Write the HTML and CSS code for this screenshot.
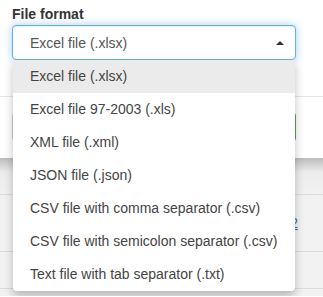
FILE: index.html
```html
<!DOCTYPE html>
<html lang="en">
<head>
    <meta charset="UTF-8">
    <meta name="viewport" content="width=device-width, initial-scale=1.0">
    <title>Export</title>
    <link rel="stylesheet" href="styles.css">
</head>
<body>
    <div class="panel">
        <label class="field-label">File format</label>
        <div class="select-wrap">
            <div class="select">Excel file (.xlsx)<span class="caret"></span></div>
            <ul class="menu">
                <li class="active">Excel file (.xlsx)</li>
                <li>Excel file 97-2003 (.xls)</li>
                <li>XML file (.xml)</li>
                <li>JSON file (.json)</li>
                <li>CSV file with comma separator (.csv)</li>
                <li>CSV file with semicolon separator (.csv)</li>
                <li>Text file with tab separator (.txt)</li>
            </ul>
        </div>
    </div>

    <div class="toolbar">
        <div class="input-group">
            <span class="input"></span>
            <button class="btn-ok">Export</button>
        </div>
    </div>

    <div class="list">
        <div class="row"></div>
        <div class="row pager"><a href="#">2</a></div>
        <div class="row"></div>
    </div>
</body>
</html>
```

FILE: styles.css
```css
body {
    font-family: "Liberation Sans", Arial, sans-serif;
    font-size: 14px;
    margin: 0;
    padding: 0;
    background-color: #fff;
    color: #333;
}

.panel {
    height: 97px;
    box-sizing: border-box;
    padding: 6px 12px 0;
    border-bottom: 1px solid #e5e5e5;
}

.field-label {
    display: block;
    font-weight: bold;
    line-height: 16px;
    margin-bottom: 3px;
    color: #333;
}

.select-wrap {
    position: relative;
    width: 284px;
    z-index: 2;
}

.select {
    display: flex;
    align-items: center;
    justify-content: space-between;
    height: 35px;
    box-sizing: border-box;
    padding: 0 10px 0 17px;
    border: 1px solid #66afe9;
    border-radius: 4px;
    background-color: #fff;
    color: #555;
    box-shadow: inset 0 1px 1px rgba(0, 0, 0, .075), 0 0 8px rgba(102, 175, 233, .6);
}

.caret {
    width: 0;
    height: 0;
    border-left: 4px solid transparent;
    border-right: 4px solid transparent;
    border-bottom: 4px solid #333;
    margin-right: 1px;
}

.menu {
    position: absolute;
    top: 35px;
    left: 1px;
    right: 1px;
    margin: 0;
    padding: 0;
    list-style: none;
    background-color: #fff;
    border-radius: 0 0 4px 4px;
    box-shadow: 0 5px 10px rgba(0, 0, 0, .25);
}

.menu li {
    height: 33px;
    line-height: 33px;
    padding-left: 17px;
    color: #444;
    white-space: nowrap;
}

.menu li.active {
    background-color: #ebebeb;
}

.toolbar {
    height: 61px;
    box-sizing: border-box;
    padding: 15px 27px 0 12px;
    background-color: #fff;
}

.input-group {
    display: flex;
    height: 30px;
}

.input {
    flex: 1;
    border: 1px solid #ccc;
    border-radius: 4px 0 0 4px;
}

.btn-ok {
    width: 70px;
    border: 1px solid #4cae4c;
    border-radius: 0 4px 4px 0;
    background-color: #5cb85c;
    color: #fff;
    font-size: 14px;
}

.list {
    height: 138px;
    background: linear-gradient(#bcbcbc, #ececec 14px, #f2f2f2 40px);
}

.row {
    height: 36px;
    border-bottom: 1px solid #dcdcdc;
}

.pager {
    height: 56px;
    line-height: 56px;
    text-align: right;
    padding-right: 25px;
}

.pager a {
    color: #337ab7;
}
```
